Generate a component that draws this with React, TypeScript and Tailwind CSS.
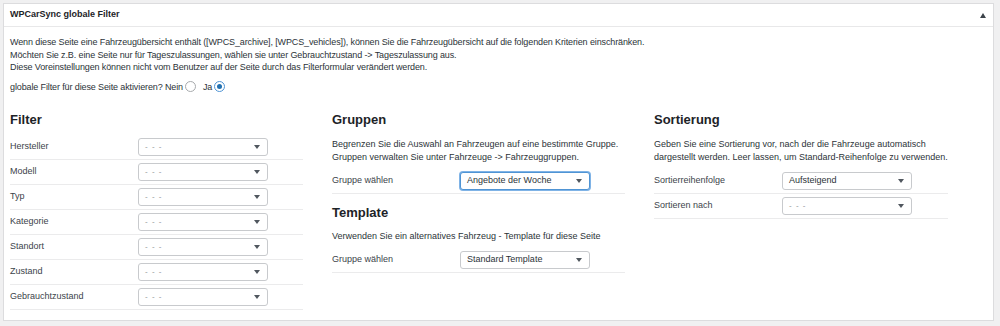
import React from "react";

const Caret = () => (
  <svg width="6" height="4" viewBox="0 0 6 4" className="shrink-0">
    <path d="M0 0 L6 0 L3 4 Z" fill="#50575e" />
  </svg>
);

function Select({ value, placeholder = false, focused = false }: { value: string; placeholder?: boolean; focused?: boolean }) {
  return (
    <div
      className={
        "flex h-[18px] w-[130px] items-center justify-between rounded-[3px] bg-white pl-[6px] pr-[7px] " +
        (focused
          ? "border border-[#4f94d4] shadow-[0_0_0_1px_#7fb3e6]"
          : "border border-[#c8cacd]")
      }
    >
      <span className={placeholder ? "text-[8px] text-[#8c8f94] tracking-[1px]" : "text-[9px] text-[#2c3338]"}>{value}</span>
      <Caret />
    </div>
  );
}

function Row({ label, children }: { label: string; children: React.ReactNode }) {
  return (
    <div className="flex h-[25px] items-center border-b border-[#ebebec]">
      <div className="w-[128px] shrink-0 text-[9px] text-[#3c434a]">{label}</div>
      {children}
    </div>
  );
}

export default function App() {
  const filters = ["Hersteller", "Modell", "Typ", "Kategorie", "Standort", "Zustand", "Gebrauchtzustand"];
  return (
    <div
      className="min-h-[326px] w-[1000px] bg-[#f0f0f1] pl-[3px] pt-[3px]"
      style={{ fontFamily: "'Liberation Sans', Arial, sans-serif" }}
    >
      <div className="h-[318px] w-[991px] border border-[#dcdcde] bg-white">
        <div className="flex h-[23px] items-center justify-between border-b border-[#e8e8e9] pl-[6px] pr-[7px]">
          <span className="text-[9px] font-bold text-[#1d2327]">WPCarSync globale Filter</span>
          <svg width="6" height="5" viewBox="0 0 6 5"><path d="M0 5 L6 5 L3 0 Z" fill="#3c434a" /></svg>
        </div>
        <div className="pl-[6px] pt-[9px] text-[9px] text-[#2c3338]">
          <p className="leading-[12.5px] tracking-[-0.12px]">
            Wenn diese Seite eine Fahrzeugübersicht enthält ([WPCS_archive], [WPCS_vehicles]), können Sie die Fahrzeugübersicht auf die folgenden Kriterien einschränken.
            <br />
            Möchten Sie z.B. eine Seite nur für Tageszulassungen, wählen sie unter Gebrauchtzustand -&gt; Tageszulassung aus.
            <br />
            Diese Voreinstellungen können nicht vom Benutzer auf der Seite durch das Filterformular verändert werden.
          </p>
          <div className="mt-[7px] flex items-center leading-[12px] tracking-[-0.12px]">
            <span>globale Filter für diese Seite aktivieren? Nein</span>
            <span className="ml-[2px] inline-block h-[11px] w-[11px] rounded-full border border-[#a7aaad]" />
            <span className="ml-[7px]">Ja</span>
            <span className="ml-[2px] flex h-[11px] w-[11px] items-center justify-center rounded-full border border-[#4f94d4]">
              <span className="h-[5px] w-[5px] rounded-full bg-[#2271b1]" />
            </span>
          </div>

          <div className="mt-[19px] flex gap-[29px]">
            <div className="w-[293px]">
              <h3 className="mb-[7px] text-[13px] font-bold leading-[16px] text-[#1d2327]">Filter</h3>
              {filters.map((f) => (
                <Row key={f} label={f}>
                  <Select value="- - -" placeholder />
                </Row>
              ))}
            </div>
            <div className="w-[293px]">
              <h3 className="mb-[10px] text-[13px] font-bold leading-[16px] text-[#1d2327]">Gruppen</h3>
              <p className="whitespace-nowrap leading-[13px]">
                Begrenzen Sie die Auswahl an Fahrzeugen auf eine bestimmte Gruppe.
                <br />
                Gruppen verwalten Sie unter Fahrzeuge -&gt; Fahrzeuggruppen.
              </p>
              <div className="mt-[5px]">
                <Row label="Gruppe wählen">
                  <Select value="Angebote der Woche" focused />
                </Row>
              </div>
              <h3 className="mb-[9px] mt-[11px] text-[13px] font-bold leading-[16px] text-[#1d2327]">Template</h3>
              <p className="whitespace-nowrap leading-[13px]">Verwenden Sie ein alternatives Fahrzeug - Template für diese Seite</p>
              <div className="mt-[5px]">
                <Row label="Gruppe wählen">
                  <Select value="Standard Template" />
                </Row>
              </div>
            </div>
            <div className="w-[294px]">
              <h3 className="mb-[10px] text-[13px] font-bold leading-[16px] text-[#1d2327]">Sortierung</h3>
              <p className="whitespace-nowrap leading-[13px]">
                Geben Sie eine Sortierung vor, nach der die Fahrzeuge automatisch
                <br />
                dargestellt werden. Leer lassen, um Standard-Reihenfolge zu verwenden.
              </p>
              <div className="mt-[5px]">
                <Row label="Sortierreihenfolge">
                  <Select value="Aufsteigend" />
                </Row>
                <Row label="Sortieren nach">
                  <Select value="- - -" placeholder />
                </Row>
              </div>
            </div>
          </div>
        </div>
      </div>
    </div>
  );
}
